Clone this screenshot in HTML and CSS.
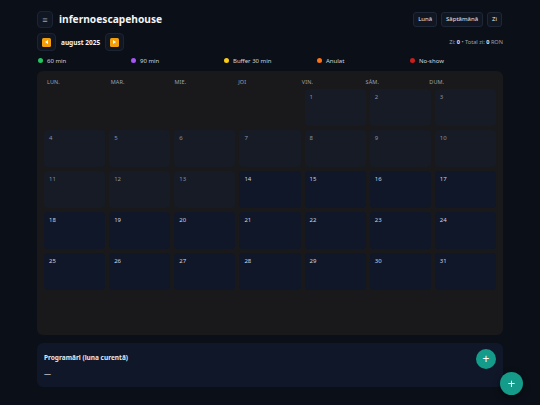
FILE: index.html
```html
<!DOCTYPE html>
<html lang="ro">
<head>
<meta charset="utf-8">
<title>infernoescapehouse</title>
<link rel="stylesheet" href="styles.css">
</head>
<body>
<div class="app">
  <header class="topbar">
    <div class="brand">
      <button class="icon-btn menu-btn" type="button">≡</button>
      <h1 class="title">infernoescapehouse</h1>
    </div>
    <div class="views">
      <button class="view-btn" type="button">Lună</button>
      <button class="view-btn" type="button">Săptămână</button>
      <button class="view-btn" type="button">Zi</button>
    </div>
  </header>

  <div class="navrow">
    <div class="nav">
      <button class="icon-btn nav-btn" type="button"><span class="arrow left"></span></button>
      <span class="month">august 2025</span>
      <button class="icon-btn nav-btn" type="button"><span class="arrow right"></span></button>
    </div>
    <div class="totals">Zi: <b>0</b> • Total zi: <b>0</b> RON</div>
  </div>

  <ul class="legend">
    <li><span class="dot green"></span>60 min</li>
    <li><span class="dot purple"></span>90 min</li>
    <li><span class="dot yellow"></span>Buffer 30 min</li>
    <li><span class="dot orange"></span>Anulat</li>
    <li><span class="dot red"></span>No-show</li>
  </ul>

  <section class="calendar">
    <div class="weekdays">
      <span>LUN.</span><span>MAR.</span><span>MIE.</span><span>JOI</span><span>VIN.</span><span>SÂM.</span><span>DUM.</span>
    </div>
    <div class="grid">
      <div class="cell empty"></div>
      <div class="cell empty"></div>
      <div class="cell empty"></div>
      <div class="cell empty"></div>
      <div class="cell past">1</div>
      <div class="cell past">2</div>
      <div class="cell past">3</div>
      <div class="cell past">4</div>
      <div class="cell past">5</div>
      <div class="cell past">6</div>
      <div class="cell past">7</div>
      <div class="cell past">8</div>
      <div class="cell past">9</div>
      <div class="cell past">10</div>
      <div class="cell past">11</div>
      <div class="cell past">12</div>
      <div class="cell past">13</div>
      <div class="cell future">14</div>
      <div class="cell future">15</div>
      <div class="cell future">16</div>
      <div class="cell future">17</div>
      <div class="cell future">18</div>
      <div class="cell future">19</div>
      <div class="cell future">20</div>
      <div class="cell future">21</div>
      <div class="cell future">22</div>
      <div class="cell future">23</div>
      <div class="cell future">24</div>
      <div class="cell future">25</div>
      <div class="cell future">26</div>
      <div class="cell future">27</div>
      <div class="cell future">28</div>
      <div class="cell future">29</div>
      <div class="cell future">30</div>
      <div class="cell future">31</div>
    </div>
  </section>

  <section class="bookings">
    <h2 class="bookings-title">Programări (luna curentă)</h2>
    <div class="bookings-empty">—</div>
    <button class="add-btn" type="button">+</button>
  </section>
</div>
<button class="fab" type="button">+</button>
</body>
</html>
```

FILE: styles.css
```css
* { box-sizing: border-box; }

html, body {
  margin: 0;
  padding: 0;
  background: #0b0f17;
  color: #e5e7eb;
  font-family: "Noto Sans", "Open Sans", sans-serif;
}

body {
  width: 540px;
  height: 405px;
  overflow: hidden;
}

.app {
  padding: 10px 37px 0 37px;
}

button {
  font-family: inherit;
  cursor: pointer;
}

.topbar {
  display: flex;
  align-items: center;
  justify-content: space-between;
  height: 18px;
}

.brand {
  display: flex;
  align-items: center;
  gap: 6px;
}

.icon-btn {
  display: flex;
  align-items: center;
  justify-content: center;
  padding: 0;
  background: #111623;
  border: 1px solid #1c2333;
  border-radius: 4px;
  color: #9ca3af;
}

.menu-btn {
  width: 16px;
  height: 17px;
  font-size: 9px;
  line-height: 1;
}

.title {
  margin: 0;
  font-size: 10.2px;
  font-weight: 700;
  color: #f3f4f6;
  letter-spacing: 0;
}

.views {
  display: flex;
  gap: 4px;
  margin-right: 1px;
}

.view-btn {
  height: 15px;
  padding: 0 4px;
  background: #111623;
  border: 1px solid #1f2737;
  border-radius: 3px;
  color: #e5e7eb;
  font-size: 6px;
  line-height: 13px;
}

.navrow {
  display: flex;
  align-items: center;
  justify-content: space-between;
  margin-top: 5px;
  height: 18px;
}

.nav {
  display: flex;
  align-items: center;
  gap: 5px;
}

.nav-btn {
  width: 19px;
  height: 18px;
}

.arrow {
  position: relative;
  display: block;
  width: 9px;
  height: 9px;
  background: #f59e0b;
  border-radius: 1.5px;
}

.arrow::after {
  content: "";
  position: absolute;
  top: 2px;
  width: 0;
  height: 0;
  border-top: 2.5px solid transparent;
  border-bottom: 2.5px solid transparent;
}

.arrow.left::after {
  left: 3px;
  border-right: 3px solid #fff;
}

.arrow.right::after {
  left: 3px;
  border-left: 3px solid #fff;
}

.month {
  font-size: 6.5px;
  font-weight: 700;
  color: #f3f4f6;
}

.totals {
  font-size: 5.6px;
  color: #9ca3af;
}

.totals b {
  color: #e5e7eb;
}

.legend {
  display: grid;
  grid-template-columns: repeat(5, 1fr);
  list-style: none;
  margin: 5px 0 0 0;
  padding: 0 0 0 1px;
  height: 9px;
}

.legend li {
  display: flex;
  align-items: center;
  gap: 4px;
  font-size: 6px;
  color: #d1d5db;
}

.dot {
  width: 5px;
  height: 5px;
  border-radius: 50%;
  display: inline-block;
}

.dot.green { background: #22c55e; }
.dot.purple { background: #a855f7; }
.dot.yellow { background: #facc15; }
.dot.orange { background: #f97316; }
.dot.red { background: #c81e1e; }

.calendar {
  margin-top: 6px;
  height: 264px;
  background: #19191b;
  border-radius: 6px;
  padding: 6px 7px 0 7px;
}

.weekdays {
  display: grid;
  grid-template-columns: repeat(7, 1fr);
  padding: 0 3px;
  height: 10px;
  align-items: center;
  font-size: 5.5px;
  color: #9ca3af;
  letter-spacing: 0.1px;
}

.grid {
  display: grid;
  grid-template-columns: repeat(7, 1fr);
  grid-auto-rows: 37px;
  gap: 4px;
  margin-top: 2px;
}

.cell {
  border-radius: 4px;
  padding: 4px 5px;
  font-size: 6px;
  line-height: 8px;
}

.cell.empty {
  background: transparent;
}

.cell.past {
  background: #161b25;
  color: #8b93a3;
}

.cell.future {
  background: #0f1729;
  color: #cbd5e1;
}

.bookings {
  position: relative;
  margin-top: 8px;
  height: 44px;
  background: #0f1729;
  border-radius: 6px;
  padding: 10px 7px 0 7px;
}

.bookings-title {
  margin: 0;
  font-size: 6.5px;
  font-weight: 700;
  color: #e5e7eb;
  line-height: 10px;
}

.bookings-empty {
  margin-top: 6px;
  font-size: 7px;
  line-height: 10px;
  color: #e5e7eb;
}

.add-btn {
  position: absolute;
  top: 6px;
  right: 7px;
  width: 20px;
  height: 20px;
  border-radius: 50%;
  border: none;
  background: #149b8a;
  color: #fff;
  font-size: 12px;
  line-height: 20px;
  padding: 0;
}

.fab {
  position: fixed;
  right: 17px;
  bottom: 10px;
  width: 23px;
  height: 23px;
  border-radius: 50%;
  border: none;
  background: #149b8a;
  color: #fff;
  font-size: 13px;
  line-height: 23px;
  padding: 0;
  box-shadow: 0 2px 6px rgba(0,0,0,0.5);
}
```
